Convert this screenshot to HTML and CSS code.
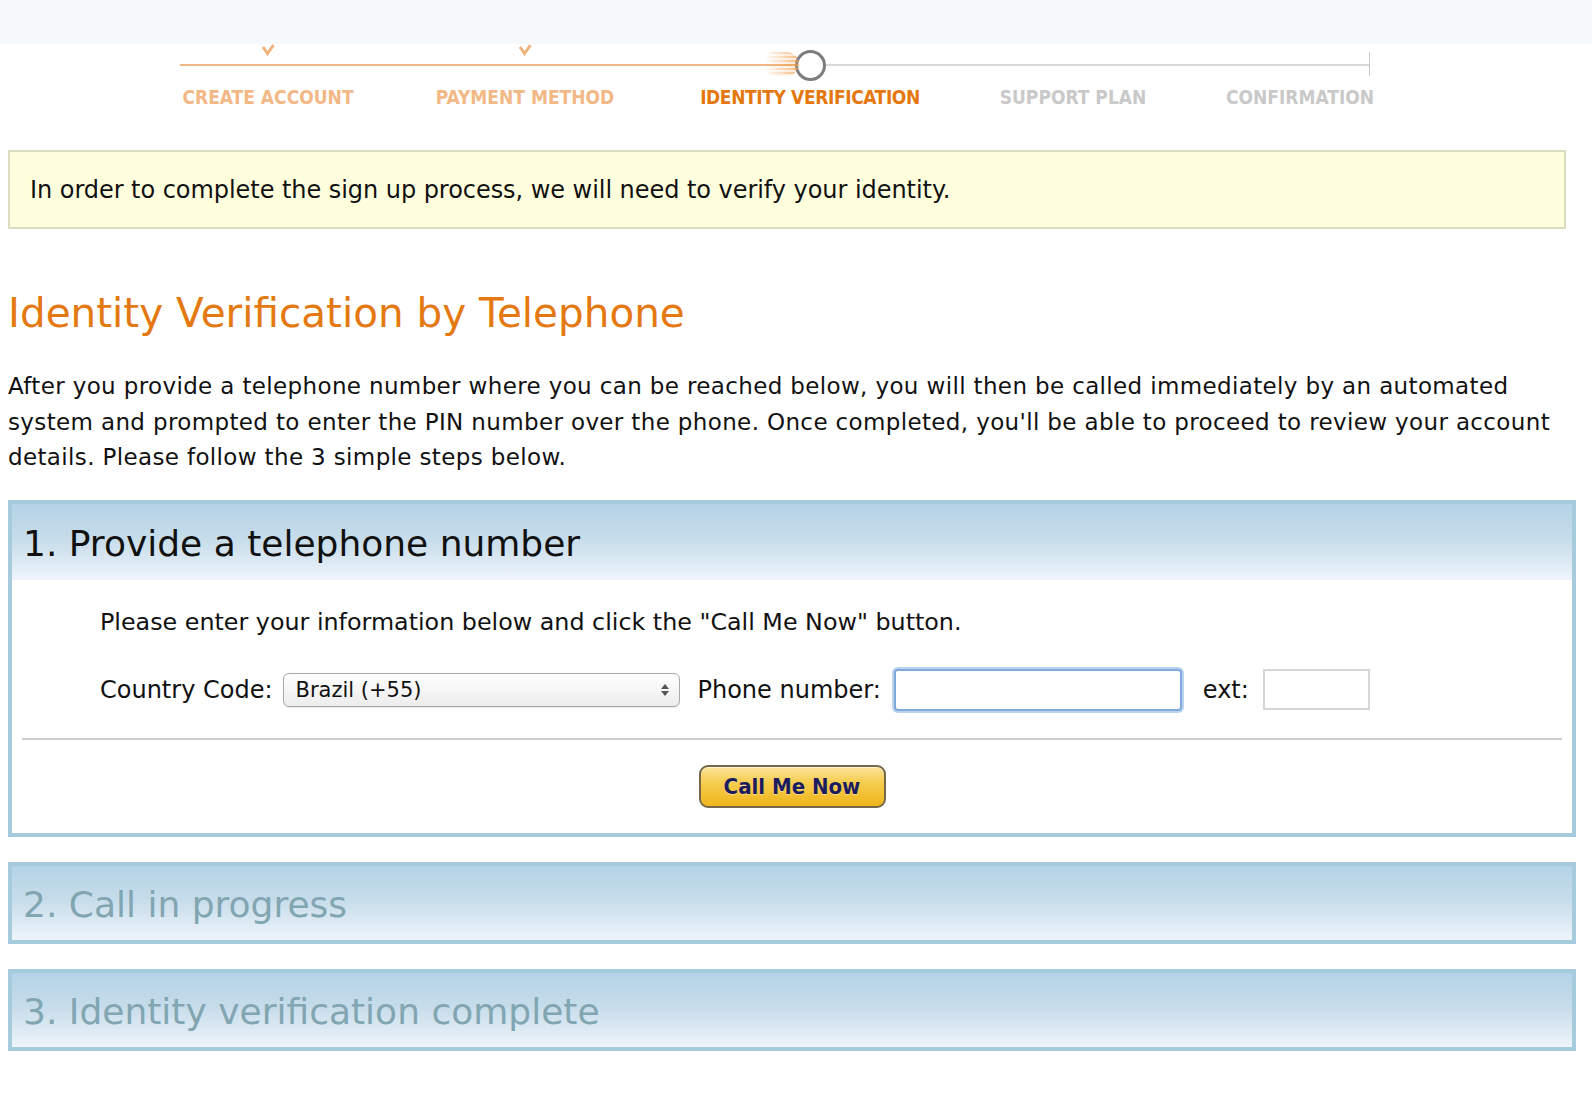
FILE: index.html
```html
<!DOCTYPE html>
<html>
<head>
<meta charset="utf-8">
<title>Identity Verification</title>
<link rel="stylesheet" href="styles.css">
</head>
<body>
<div class="topband"></div>
<div class="steps">
  <div class="step done">
    <div class="marker"><svg class="check" width="14" height="12" viewBox="0 0 14 12"><path d="M2 3 L6.5 9.5 L12.5 1" fill="none" stroke="#f0b27c" stroke-width="3"/></svg></div>
    <div class="label">CREATE ACCOUNT</div>
  </div>
  <div class="step done">
    <div class="marker"><svg class="check" width="14" height="12" viewBox="0 0 14 12"><path d="M2 3 L6.5 9.5 L12.5 1" fill="none" stroke="#f0b27c" stroke-width="3"/></svg></div>
    <div class="label">PAYMENT METHOD</div>
  </div>
  <div class="step current">
    <div class="marker"><span class="ring"></span></div>
    <div class="label">IDENTITY VERIFICATION</div>
  </div>
  <div class="step todo">
    <div class="marker"></div>
    <div class="label">SUPPORT PLAN</div>
  </div>
  <div class="step todo">
    <div class="marker"></div>
    <div class="label">CONFIRMATION</div>
  </div>
</div>

<div class="main">
  <div class="notice">In order to complete the sign up process, we will need to verify your identity.</div>

  <h1 class="title">Identity Verification by Telephone</h1>

  <p class="intro">After you provide a telephone number where you can be reached below, you will then be called immediately by an automated system and prompted to enter the PIN number over the phone. Once completed, you'll be able to proceed to review your account details. Please follow the 3 simple steps below.</p>

  <div class="panel active">
    <div class="panel-head">1. Provide a telephone number</div>
    <div class="panel-body">
      <div class="instr">Please enter your information below and click the "Call Me Now" button.</div>
      <div class="form-row">
        <span class="flabel">Country Code:</span>
        <div class="select"><span>Brazil (+55)</span><span class="arrows"><i class="up"></i><i class="down"></i></span></div>
        <span class="flabel phone-label">Phone number:</span>
        <div class="phone-input"></div>
        <span class="flabel ext-label">ext:</span>
        <div class="ext-input"></div>
      </div>
    </div>
    <div class="sep"></div>
    <div class="actions">
      <div class="btn">Call Me Now</div>
    </div>
  </div>

  <div class="panel inactive">
    <div class="panel-head">2. Call in progress</div>
  </div>

  <div class="panel inactive">
    <div class="panel-head">3. Identity verification complete</div>
  </div>
</div>
</body>
</html>
```

FILE: styles.css
```css
html, body {
  margin: 0;
  padding: 0;
  background: #ffffff;
}
body {
  font-family: "DejaVu Sans", Verdana, sans-serif;
  color: #111;
}
.topband {
  height: 44px;
  background: #f5f9fc;
}
.steps {
  display: grid;
  grid-template-columns: 176px 338px 232px 294px 160px;
  margin-left: 180px;
  width: 1200px;
  height: 66px;
  margin-top: -44px;
  padding-top: 44px;
  background:
    linear-gradient(#f0b884, #f0b884) no-repeat 0 64px / 616px 2px,
    linear-gradient(#d9d9d9, #d9d9d9) no-repeat 646px 64px / 543px 2px,
    linear-gradient(#c8c8c8, #c8c8c8) no-repeat 1189px 52px / 1px 24px;
}
.step {
  display: flex;
  flex-direction: column;
  align-items: center;
  min-width: 0;
}
.marker {
  height: 43px;
  display: flex;
  justify-content: center;
  align-items: flex-start;
  position: relative;
}
.ring {
  margin-top: 6px;
  width: 25px;
  height: 25px;
  border: 3px solid #7d7d7d;
  border-radius: 50%;
  background: #fff;
  position: relative;
}
.ring::before {
  content: "";
  position: absolute;
  right: 24px;
  top: -1px;
  width: 34px;
  height: 24px;
  background: repeating-linear-gradient(to bottom, rgba(242,160,80,0.75) 0 2px, rgba(242,160,80,0.25) 2px 4px);
  -webkit-mask-image: linear-gradient(to right, transparent, #000);
  mask-image: linear-gradient(to right, transparent, #000);
  border-radius: 0 12px 12px 0;
}
.label {
  font-family: "DejaVu Sans Condensed", "DejaVu Sans", sans-serif;
  font-weight: bold;
  font-size: 19px;
  line-height: 20px;
  white-space: nowrap;
}
.current .label { letter-spacing: -0.4px; }
.done .label { color: #f2b886; }
.current .label { color: #e4780f; }
.todo .label { color: #c9c9c9; }

.main {
  padding-left: 8px;
  width: 1568px;
}
.notice {
  margin-top: 40px;
  width: 1534px;
  height: 75px;
  box-sizing: content-box;
  border: 2px solid #dcdcc0;
  background: #ffffdd;
  padding: 0 0 0 20px;
  display: flex;
  align-items: center;
  font-size: 24px;
  letter-spacing: -0.05px;
  color: #111;
}
.title {
  margin: 60px 0 0 0;
  font-weight: normal;
  font-size: 40.5px;
  line-height: 48px;
  color: #e47911;
}
.intro {
  margin: 32px 0 0 0;
  font-size: 23px;
  letter-spacing: 0.36px;
  line-height: 35.5px;
  color: #111;
}
.panel {
  width: 1560px;
  border: 4px solid #a6cbdc;
  background: #fff;
}
.panel.active {
  margin-top: 24px;
}
.panel.inactive {
  margin-top: 25px;
}
.panel-head {
  height: 76px;
  box-sizing: border-box;
  padding-top: 3px;
  display: flex;
  align-items: center;
  padding-left: 11px;
  font-size: 36px;
  background: linear-gradient(to bottom, #b4d3e6 0%, #c6dcea 45%, #eef4fb 100%);
}
.active .panel-head {
  color: #111;
}
.inactive .panel-head {
  color: #81a6b2;
  height: 74px;
}
.panel-body {
  padding: 25px 0 0 88px;
}
.instr {
  font-size: 23.8px;
  line-height: 34px;
}
.form-row {
  margin-top: 28px;
  display: flex;
  align-items: center;
  height: 46px;
  font-size: 24px;
}
.select {
  margin-left: 10px;
  width: 373px;
  height: 32px;
  border: 1px solid #a8a8a8;
  border-radius: 6px;
  background: linear-gradient(#ffffff, #ececec);
  display: flex;
  align-items: center;
  justify-content: space-between;
  padding: 0 10px 0 12px;
  font-size: 21px;
  box-shadow: 0 1px 1px rgba(0,0,0,0.08);
}
.arrows {
  display: flex;
  flex-direction: column;
  gap: 2px;
}
.arrows i {
  width: 0;
  height: 0;
  border-left: 4px solid transparent;
  border-right: 4px solid transparent;
}
.arrows .up { border-bottom: 5px solid #555; }
.arrows .down { border-top: 5px solid #555; }
.phone-label {
  margin-left: 18px;
}
.phone-input {
  margin-left: 13px;
  width: 284px;
  height: 38px;
  border: 2px solid #80a9dc;
  border-radius: 4px;
  box-shadow: 0 0 0 2px #bcd3ef;
  background: #fff;
}
.ext-label {
  margin-left: 21px;
}
.ext-input {
  margin-left: 14px;
  width: 103px;
  height: 37px;
  border: 2px solid #d6d6d6;
  background: #fff;
}
.sep {
  margin: 25px 10px 0 10px;
  height: 2px;
  background: #cccccc;
}
.actions {
  display: flex;
  justify-content: center;
  padding: 25px 0 25px 0;
}
.btn {
  width: 183px;
  height: 39px;
  border: 2px solid #76694a;
  border-radius: 9px;
  background: linear-gradient(to bottom, #fbe39a 0%, #f6cd4f 40%, #efb51c 100%);
  color: #1b1b5e;
  font-family: "DejaVu Sans Condensed", "DejaVu Sans", sans-serif;
  font-weight: bold;
  font-size: 22px;
  display: flex;
  align-items: center;
  justify-content: center;
  text-shadow: 0 1px 0 rgba(255,255,255,0.4);
  box-shadow: inset 0 1px 0 rgba(255,255,255,0.6);
}
```
